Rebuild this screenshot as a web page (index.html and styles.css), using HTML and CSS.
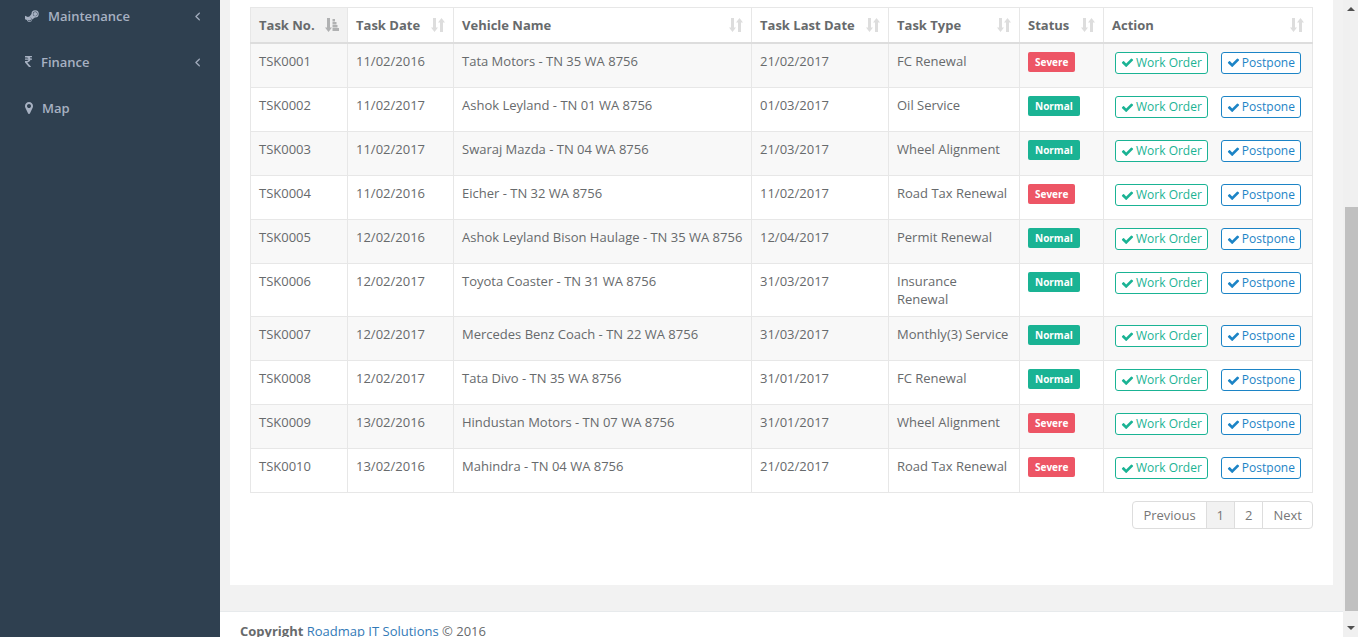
FILE: index.html
```
<!DOCTYPE html>
<html lang="en">
<head>
<meta charset="utf-8">
<title>Maintenance Tasks</title>
<link rel="stylesheet" href="styles.css">
</head>
<body>
<svg class="sprite" aria-hidden="true">
  <symbol id="check" viewBox="0 0 1792 1792"><path d="M1671 566q0 40-28 68l-724 724-136 136q-28 28-68 28t-68-28l-136-136-362-362q-28-28-28-68t28-68l136-136q28-28 68-28t68 28l294 295 656-657q28-28 68-28t68 28l136 136q28 28 28 68z"/></symbol>
  <symbol id="inr" viewBox="448 0 898 1792"><path d="M1345 470v102q0 14-9 23t-23 9h-168q-23 144-129 234t-276 110q167 178 459 536 14 16 4 34-8 18-29 18h-195q-16 0-25-12-306-367-498-571-9-9-9-22v-127q0-13 9.500-22.500t22.500-9.500h112q132 0 212.500-43t102.500-125h-427q-14 0-23-9t-9-23v-102q0-14 9-23t23-9h413q-57-113-268-113h-145q-13 0-22.500-9.500t-9.500-22.500v-133q0-14 9-23t23-9h832q14 0 23 9t9 23v102q0 14-9 23t-23 9h-233q47 61 64 144h171q14 0 23 9t9 23z"/></symbol>
  <symbol id="marker" viewBox="384 0 1024 1792"><path d="M1152 640q0-106-75-181t-181-75-181 75-75 181 75 181 181 75 181-75 75-181zm256 0q0 109-33 179l-364 774q-16 33-47.500 52t-67.500 19-67.500-19-46.500-52l-365-774q-33-70-33-179 0-212 150-362t362-150 362 150 150 362z"/></symbol>
  <symbol id="angle" viewBox="588 0 616 1792"><path stroke="currentColor" stroke-width="50" d="M1203 544q0 13-10 23l-393 393 393 393q10 10 10 23t-10 23l-50 50q-10 10-23 10t-23-10l-466-466q-10-10-10-23t10-23l466-466q10-10 23-10t23 10l50 50q10 10 10 23z"/></symbol>
  <symbol id="steam" viewBox="0 0 14 14"><path fill-rule="evenodd" d="M10.200 1.200a3.700 3.700 0 1 1-.3 7.400L7.200 10.600A2.700 2.700 0 0 1 1.900 11L0 10.200V6.700l2.900 1.200a2.600 2.600 0 0 1 1.600-.4L6.500 5A3.700 3.700 0 0 1 10.200 1.200zM10.200 2.500a2.400 2.400 0 1 0 0 4.800 2.400 2.400 0 0 0 0-4.800zM2.700 10.800a2 2 0 1 0 1.900-2.600l.9.500a1.500 1.500 0 0 1-1.200 2.400z"/><circle cx="10.200" cy="4.900" r="2"/><circle cx="4.500" cy="10" r="1.500"/></symbol>
  <symbol id="sort" viewBox="0 0 14 14"><path d="M2 0h3v9.500h2L3.500 14 0 9.500h2zM9 14h3V4.500h2L10.500 0 7 4.500h2z"/></symbol>
  <symbol id="sorted" viewBox="0 0 14 14"><path d="M2 0h3v9.500h2L3.500 14 0 9.500h2zM7.500 1h2.500v2.500H7.500zM7.500 4h4v2.500h-4zM7.500 7h5v2.500h-5zM7.500 10H14v3H7.500z"/></symbol>
</svg>
<div class="app">
  <nav class="sidebar">
    <a href="#maintenance"><svg class="i-steam"><use href="#steam"/></svg><span>Maintenance</span><svg class="i-angle"><use href="#angle"/></svg></a>
    <a href="#finance"><svg class="i-inr"><use href="#inr"/></svg><span>Finance</span><svg class="i-angle"><use href="#angle"/></svg></a>
    <a href="#map"><svg class="i-marker"><use href="#marker"/></svg><span>Map</span></a>
  </nav>
  <div class="page">
    <main class="panel">
      <table class="tasks">
        <colgroup><col class="c-no"><col class="c-date"><col><col class="c-last"><col class="c-type"><col class="c-status"><col class="c-action"></colgroup>
        <thead><tr id="head"></tr></thead>
        <tbody id="rows"></tbody>
      </table>
      <div class="pager"><button type="button">Previous</button><button type="button" class="current">1</button><button type="button">2</button><button type="button">Next</button></div>
    </main>
    <footer class="footer"><strong>Copyright</strong> <a href="#company">Roadmap IT Solutions</a> © 2016</footer>
  </div>
  <div class="scrollbar" aria-hidden="true"><span class="up"></span><span class="thumb"></span><span class="down"></span></div>
</div>
<script src="tasks.js"></script>
</body>
</html>
```
FILE: styles.css
```
* { box-sizing: border-box; }
body { margin: 0; font: 13px/18px "Open Sans", sans-serif; color: #676a6c; background: #f2f2f2; }
svg { fill: currentColor; flex: none; }
a { text-decoration: none; }
.sprite { display: none; }
.app { display: grid; grid-template: minmax(0, 1fr) / 220px minmax(0, 1fr) 15px; height: 100vh; overflow: hidden; }

.sidebar { background: #2f4050; }
.sidebar a { display: flex; align-items: center; height: 46px; padding: 0 20px 0 25px; color: #a7b1c2; font-weight: 600; }
.sidebar a:first-child { height: 39px; padding-bottom: 7px; }
.sidebar span { flex: 1; }
.i-steam { width: 14px; height: 14px; margin-right: 9px; }
.i-inr { width: 7px; height: 14px; margin-right: 9px; }
.i-marker { width: 8px; height: 14px; margin-right: 9px; }
.i-angle { width: 5px; height: 14px; }

.page { min-width: 0; }
.panel { margin: 0 10px 26px; padding: 7px 20px 56px; background: #fff; }
.tasks { width: 100%; table-layout: fixed; border-collapse: collapse; }
.c-no { width: 97px; }
.c-date { width: 106px; }
.c-last { width: 137px; }
.c-type { width: 131px; }
.c-status { width: 84px; }
.c-action { width: 209px; }
th, td { border: 1px solid #e7e7e7; padding: 8px; text-align: left; vertical-align: top; }
th { height: 35px; padding-bottom: 7px; border-bottom: 2px solid #ddd; font-weight: 700; white-space: nowrap; }
th.active { background: #f2f2f2; }
.head { display: flex; align-items: center; justify-content: space-between; }
.head svg { width: 14px; height: 14px; color: #ddd; }
.head .on { color: #b0b1b2; }
td { height: 44px; }
tbody tr:first-child td { height: 45px; }
tbody tr:nth-child(odd) { background: #f8f8f8; }
.label { display: block; width: fit-content; padding: 0 7px; border-radius: 2px; color: #fff; font-size: 10px; line-height: 20px; font-weight: 700; }
.severe { background: #ed5565; }
.normal { background: #1ab394; }
.actions { display: flex; gap: 13px; padding-left: 3px; }
.actions button { display: flex; align-items: center; gap: 2px; height: 22px; padding: 0 5px; border: 1px solid; border-radius: 3px; background: #fff; font: 12px/18px "Open Sans", sans-serif; white-space: nowrap; }
.actions svg { width: 13px; height: 13px; }
.work { color: #1ab394; }
.postpone { color: #1c84c6; }
.pager { display: flex; justify-content: flex-end; margin-top: 8px; }
.pager button { height: 28px; margin-left: -1px; padding: 0 10px; border: 1px solid #ddd; background: #fff; color: #777; font: 13px/18px "Open Sans", sans-serif; }
.pager button:first-child { border-radius: 4px 0 0 4px; }
.pager button:last-child { border-radius: 0 4px 4px 0; }
.pager .current { background: #f2f2f2; }
.footer { padding: 10px 20px; border-top: 1px solid #e7eaec; background: #fff; }
.footer a { color: #337ab7; }

.scrollbar { display: grid; grid-template-rows: 17px 190fr 404fr 26px; justify-items: center; background: #f0f0f0; }
.up { grid-row: 1; align-self: center; border: 4px solid transparent; border-top: 0; border-bottom-color: #505050; }
.thumb { grid-row: 3; width: 13px; justify-self: end; background: #c0c0c0; }
.down { grid-row: 4; margin-top: 7px; align-self: center; border: 4px solid transparent; border-bottom: 0; border-top-color: #505050; }
```
FILE: tasks.js
```
const columns = ["Task No.", "Task Date", "Vehicle Name", "Task Last Date", "Task Type", "Status", "Action"];
const tasks = [
  ["TSK0001", "11/02/2016", "Tata Motors - TN 35 WA 8756", "21/02/2017", "FC Renewal", "Severe"],
  ["TSK0002", "11/02/2017", "Ashok Leyland - TN 01 WA 8756", "01/03/2017", "Oil Service", "Normal"],
  ["TSK0003", "11/02/2017", "Swaraj Mazda - TN 04 WA 8756", "21/03/2017", "Wheel Alignment", "Normal"],
  ["TSK0004", "11/02/2016", "Eicher - TN 32 WA 8756", "11/02/2017", "Road Tax Renewal", "Severe"],
  ["TSK0005", "12/02/2016", "Ashok Leyland Bison Haulage - TN 35 WA 8756", "12/04/2017", "Permit Renewal", "Normal"],
  ["TSK0006", "12/02/2017", "Toyota Coaster - TN 31 WA 8756", "31/03/2017", "Insurance Renewal", "Normal"],
  ["TSK0007", "12/02/2017", "Mercedes Benz Coach - TN 22 WA 8756", "31/03/2017", "Monthly(3) Service", "Normal"],
  ["TSK0008", "12/02/2017", "Tata Divo - TN 35 WA 8756", "31/01/2017", "FC Renewal", "Normal"],
  ["TSK0009", "13/02/2016", "Hindustan Motors - TN 07 WA 8756", "31/01/2017", "Wheel Alignment", "Severe"],
  ["TSK0010", "13/02/2016", "Mahindra - TN 04 WA 8756", "21/02/2017", "Road Tax Renewal", "Severe"]
];
const button = (cls, text) => `<button type="button" class="${cls}"><svg><use href="#check"/></svg>${text}</button>`;

document.getElementById("head").innerHTML = columns.map((name, i) =>
  `<th scope="col" class="${i ? "" : "active"}"><div class="head">${name}<svg class="${i ? "" : "on"}"><use href="#${i ? "sort" : "sorted"}"/></svg></div></th>`).join("");
document.getElementById("rows").innerHTML = tasks.map(task => {
  const status = task[5];
  return `<tr>${task.slice(0, 5).map(v => `<td>${v}</td>`).join("")}
    <td><span class="label ${status.toLowerCase()}">${status}</span></td>
    <td><div class="actions">${button("work", "Work Order")}${button("postpone", "Postpone")}</div></td></tr>`;
}).join("");
```
